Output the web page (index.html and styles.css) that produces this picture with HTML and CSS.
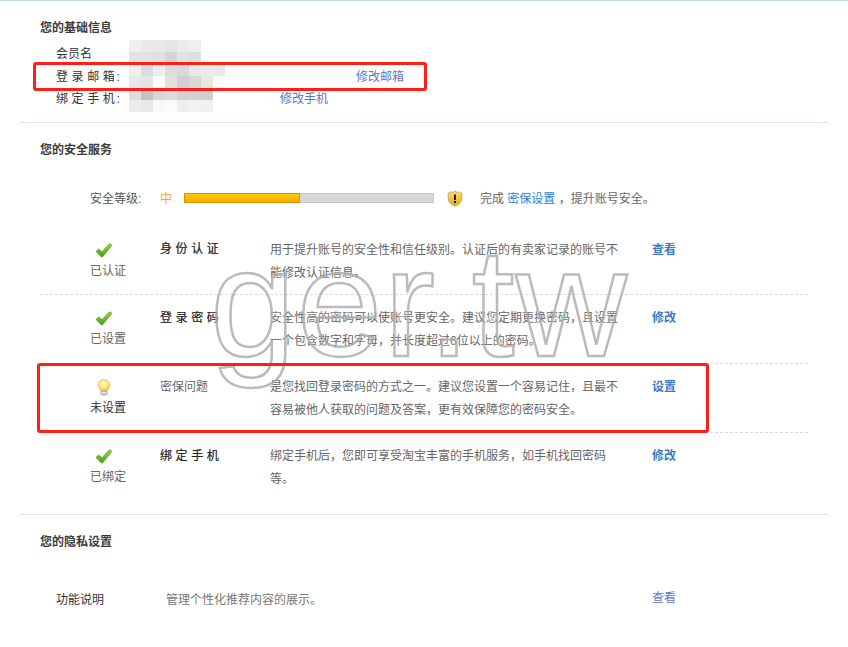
FILE: index.html
```html
<!DOCTYPE html>
<html lang="zh-CN">
<head>
<meta charset="utf-8">
<title>账号安全</title>
<link rel="stylesheet" href="styles.css">
</head>
<body>
<main class="page">
  <section class="block basic">
    <h2 class="heading">您的基础信息</h2>
    <dl class="info">
      <div class="info-row"><dt class="plain">会员名</dt><dd></dd></div>
      <div class="info-row"><dt>登录邮箱<span class="colon">:</span></dt><dd class="mail-link"><a class="link">修改邮箱</a></dd></div>
      <div class="info-row"><dt>绑定手机<span class="colon">:</span></dt><dd class="phone-link"><a class="link">修改手机</a></dd></div>
    </dl>
  </section>

  <section class="block security">
    <h2 class="heading">您的安全服务</h2>
    <div class="level">
      <span class="level-label">安全等级:</span>
      <span class="level-value">中</span>
      <div class="bar"><div class="bar-fill"></div></div>
      <svg class="shield" width="16" height="17" viewBox="0 0 16 17">
        <defs><linearGradient id="sg" x1="0" y1="0" x2="0" y2="1"><stop offset="0" stop-color="#f7dc6a"/><stop offset="1" stop-color="#e2ac1c"/></linearGradient></defs>
        <path d="M8 .8 10 2.6 12 1.8 15 3.4 14.6 10C14 13 11 15 8 16.2 5 15 2 13 1.4 10L1 3.4 4 1.8 6 2.6Z" fill="url(#sg)" stroke="#c9a45a" stroke-width=".9"/>
        <rect x="7" y="4.5" width="2" height="5.5" fill="#3a1a10"/>
        <rect x="7" y="11" width="2" height="2" fill="#1a1008"/>
      </svg>
      <p class="level-tip">完成 <a class="tip-link">密保设置</a> ，提升账号安全。</p>
    </div>

    <div class="service">
      <div class="state">
        <svg class="check" width="18" height="15" viewBox="0 0 18 15"><use href="#tick"/></svg>
        <span>已认证</span>
      </div>
      <h3 class="title">身份认证</h3>
      <p class="desc">用于提升账号的安全性和信任级别。认证后的有卖家记录的账号不能修改认证信息。</p>
      <a class="action">查看</a>
    </div>
    <div class="service">
      <div class="state">
        <svg class="check" width="18" height="15" viewBox="0 0 18 15"><use href="#tick"/></svg>
        <span>已设置</span>
      </div>
      <h3 class="title">登录密码</h3>
      <p class="desc">安全性高的密码可以使账号更安全。建议您定期更换密码，且设置一个包含数字和字母，并长度超过6位以上的密码。</p>
      <a class="action">修改</a>
    </div>
    <div class="service">
      <div class="state state-todo">
        <svg class="check" width="18" height="17" viewBox="0 0 18 17">
          <defs><radialGradient id="bg" cx=".45" cy=".35" r=".7"><stop offset="0" stop-color="#fffbe0"/><stop offset=".55" stop-color="#fde27a"/><stop offset="1" stop-color="#f5b92e"/></radialGradient></defs>
          <path d="M9 .6C5.600.6 3 3 3 6c0 2.400 1.700 3.500 2.600 6h6.800C13.300 9.500 15 8.400 15 6 15 3 12.400.6 9 .6Z" fill="url(#bg)" stroke="#f2c450" stroke-width=".8"/>
          <rect x="6" y="12.200" width="6" height="3.600" rx="1" fill="#e4dcec" stroke="#9c88b0" stroke-width=".8"/>
        </svg>
        <span>未设置</span>
      </div>
      <h3 class="title title-todo">密保问题</h3>
      <p class="desc">是您找回登录密码的方式之一。建议您设置一个容易记住，且最不容易被他人获取的问题及答案，更有效保障您的密码安全。</p>
      <a class="action">设置</a>
    </div>
    <div class="service service-last">
      <div class="state">
        <svg class="check" width="18" height="15" viewBox="0 0 18 15"><use href="#tick"/></svg>
        <span>已绑定</span>
      </div>
      <h3 class="title">绑定手机</h3>
      <p class="desc">绑定手机后，您即可享受淘宝丰富的手机服务，如手机找回密码等。</p>
      <a class="action">修改</a>
    </div>
  </section>

  <section class="block privacy">
    <h2 class="heading">您的隐私设置</h2>
    <div class="privacy-row">
      <span class="privacy-name">功能说明</span>
      <p class="privacy-desc">管理个性化推荐内容的展示。</p>
      <a class="link privacy-link">查看</a>
    </div>
  </section>
</main>

<svg class="defs" width="0" height="0">
  <defs>
    <linearGradient id="tg" x1="0" y1="0" x2="0" y2="1"><stop offset="0" stop-color="#9ad94a"/><stop offset="1" stop-color="#4c9a14"/></linearGradient>
    <symbol id="tick" viewBox="0 0 18 15">
      <path d="M1 8.400 3.600 6 7 8.800 14 1.200C15 .4 16.600 1.400 16.600 2.800L7.400 14 6.400 14Z" fill="url(#tg)" stroke="#5c9e22" stroke-width=".8" stroke-linejoin="round"/>
    </symbol>
  </defs>
</svg>

<svg class="mosaic" width="96" height="72" viewBox="0 0 96 72">
  <g shape-rendering="crispEdges">
    <rect x="0" y="0" width="12" height="12" fill="#efefef"/><rect x="12" y="0" width="12" height="12" fill="#e9e9eb"/><rect x="24" y="0" width="12" height="12" fill="#e9e9e9"/><rect x="36" y="0" width="12" height="12" fill="#e6e6e6"/><rect x="48" y="0" width="12" height="12" fill="#ebebeb"/><rect x="60" y="0" width="12" height="12" fill="#efefef"/>
    <rect x="0" y="12" width="12" height="12" fill="#e2e2e4"/><rect x="12" y="12" width="12" height="12" fill="#e2e2e4"/><rect x="24" y="12" width="12" height="12" fill="#e3dfdc"/><rect x="36" y="12" width="12" height="12" fill="#d4d4d6"/><rect x="48" y="12" width="12" height="12" fill="#e1e4e6"/><rect x="60" y="12" width="12" height="12" fill="#dfdfe3"/>
    <rect x="0" y="24" width="12" height="12" fill="#f0eeee"/><rect x="12" y="24" width="12" height="12" fill="#dcdce0"/><rect x="24" y="24" width="12" height="12" fill="#eeeeee"/><rect x="36" y="24" width="12" height="12" fill="#e0dcdc"/><rect x="48" y="24" width="12" height="12" fill="#d8d8dc"/><rect x="60" y="24" width="12" height="12" fill="#e8e8e8"/><rect x="72" y="24" width="12" height="12" fill="#eaeaea"/><rect x="84" y="24" width="12" height="12" fill="#e8e8e8"/>
    <rect x="0" y="36" width="12" height="12" fill="#e8e8ea"/><rect x="12" y="36" width="12" height="12" fill="#e4e4e6"/><rect x="24" y="36" width="12" height="12" fill="#ffffff"/><rect x="36" y="36" width="12" height="12" fill="#e4e0e0"/><rect x="48" y="36" width="12" height="12" fill="#d0d0d4"/><rect x="60" y="36" width="12" height="12" fill="#d8d8d8"/><rect x="72" y="36" width="12" height="12" fill="#e8e8e0"/><rect x="84" y="36" width="12" height="12" fill="#fbfbfb"/>
    <rect x="0" y="48" width="12" height="12" fill="#dedee0"/><rect x="12" y="48" width="12" height="12" fill="#c4c4c6"/><rect x="24" y="48" width="12" height="12" fill="#d8d8dc"/><rect x="36" y="48" width="12" height="12" fill="#dcdce0"/><rect x="48" y="48" width="12" height="12" fill="#d6d0d4"/><rect x="60" y="48" width="12" height="12" fill="#d4d0d4"/><rect x="72" y="48" width="12" height="12" fill="#d0ced2"/>
    <rect x="0" y="60" width="12" height="12" fill="#ececec"/><rect x="12" y="60" width="12" height="12" fill="#e8e8e8"/><rect x="24" y="60" width="12" height="12" fill="#f8f8f8"/><rect x="36" y="60" width="12" height="12" fill="#fbfbfb"/><rect x="48" y="60" width="12" height="12" fill="#eeeeec"/><rect x="60" y="60" width="12" height="12" fill="#f2f2f2"/><rect x="72" y="60" width="12" height="12" fill="#eff1f1"/>
  </g>
</svg>

<div class="watermark">ger.tw</div>
<div class="mark mark-mail"></div>
<div class="mark mark-question"></div>
</body>
</html>
```

FILE: styles.css
```css
* { box-sizing: border-box; }

html, body {
  margin: 0;
  padding: 0;
  background: #fff;
}

body {
  position: relative;
  height: 647px;
  overflow: hidden;
  font-family: "Liberation Sans", "Noto Sans CJK SC", sans-serif;
  font-size: 12px;
  color: #666;
}

h2, h3, p, dl, dd { margin: 0; }

.page {
  border-top: 1px solid #c6d8e4;
  padding: 0 20px;
}

.block {
  border-bottom: 1px solid #d9e6f3;
}

.heading {
  margin: 0;
  padding-left: 20px;
  font-size: 12px;
  font-weight: 700;
  line-height: 18px;
  color: #3c3c3c;
}

.basic {
  height: 122px;
  padding-top: 18px;
}

.info {
  padding: 6px 0 0 36px;
}

.info-row {
  display: flex;
  height: 22.500px;
  line-height: 22px;
  color: #333;
}

.info-row dt {
  width: 73px;
  letter-spacing: 3.600px;
  white-space: nowrap;
}

.info-row dt.plain { letter-spacing: 0; }

.colon { margin-left: -2px; }

.mail-link { padding-left: 227px; }
.phone-link { padding-left: 151px; }

.link {
  color: #5f74c9;
}

.security {
  height: 392px;
  padding-top: 18px;
}

.level {
  display: flex;
  align-items: center;
  height: 20px;
  margin-top: 28px;
  padding-left: 70px;
}

.level-label { width: 70px; color: #555; }
.level-value { width: 24px; color: #f5a623; }

.bar {
  width: 250px;
  height: 10px;
  margin-top: 2px;
  background: #d8d8d8;
  border: 1px solid #c8c8c8;
  border-left: 0;
}

.bar-fill {
  width: 116px;
  height: 10px;
  margin-top: -1px;
  background: linear-gradient(#ffcc00, #f6a800);
  border: 1px solid #e09000;
}

.shield { margin-left: 13px; margin-top: 2px; }

.level-tip {
  margin-left: 17px;
  color: #666;
}

.tip-link { color: #2a80dc; }

.service {
  display: grid;
  grid-template-columns: 108px 112px 352px auto;
  height: 69px;
  margin: 0 20px;
  padding: 12px 0 0 10px;
  border-bottom: 1px dashed #dcdcdc;
}

.level + .service {
  height: 68px;
  margin-top: 20px;
}

.level + .service .title { margin-top: -1px; }

.service-last {
  border-bottom: 0;
}

.state {
  display: flex;
  flex-direction: column;
  align-items: center;
  color: #666;
  line-height: 18px;
}

.state span { margin-top: 4px; margin-left: 8px; }
.state .check { display: block; margin-top: 4px; }

.state-todo { color: #333; }
.state-todo .check { margin-top: 3px; margin-bottom: -1px; }

.title {
  margin-left: 2px;
  font-size: 12px;
  font-weight: 400;
  line-height: 23px;
  letter-spacing: 3.600px;
  color: #222;
  -webkit-text-stroke: .2px #222;
}

.title-todo {
  letter-spacing: 0;
  color: #666;
  -webkit-text-stroke: 0;
}

.desc {
  line-height: 23px;
  color: #666;
}

.action {
  padding-left: 30px;
  line-height: 23px;
  font-weight: 700;
  color: #3c78c8;
}

.privacy {
  padding-top: 18px;
  border-bottom: 0;
}

.privacy-row {
  display: flex;
  margin-top: 38px;
  padding-left: 36px;
  line-height: 23px;
}

.privacy-name { width: 110px; color: #333; }
.privacy-desc { width: 486px; color: #777; }
.privacy-link { margin-top: -2px; }

.defs { position: absolute; }

.mosaic {
  position: absolute;
  left: 129px;
  top: 40px;
}

.watermark {
  position: absolute;
  left: 210px;
  top: 203px;
  font-family: "Liberation Sans", sans-serif;
  font-size: 154px;
  line-height: 200px;
  letter-spacing: 1.200px;
  white-space: nowrap;
  color: rgba(255, 255, 255, .12);
  -webkit-text-stroke: 2.500px rgba(170, 170, 170, .8);
}

.mark {
  position: absolute;
  border: 3px solid #ff1f14;
  border-radius: 3px;
}

.mark-mail {
  left: 33px;
  top: 62px;
  width: 394px;
  height: 29px;
}

.mark-question {
  left: 37px;
  top: 363px;
  width: 672px;
  height: 70px;
}
```
